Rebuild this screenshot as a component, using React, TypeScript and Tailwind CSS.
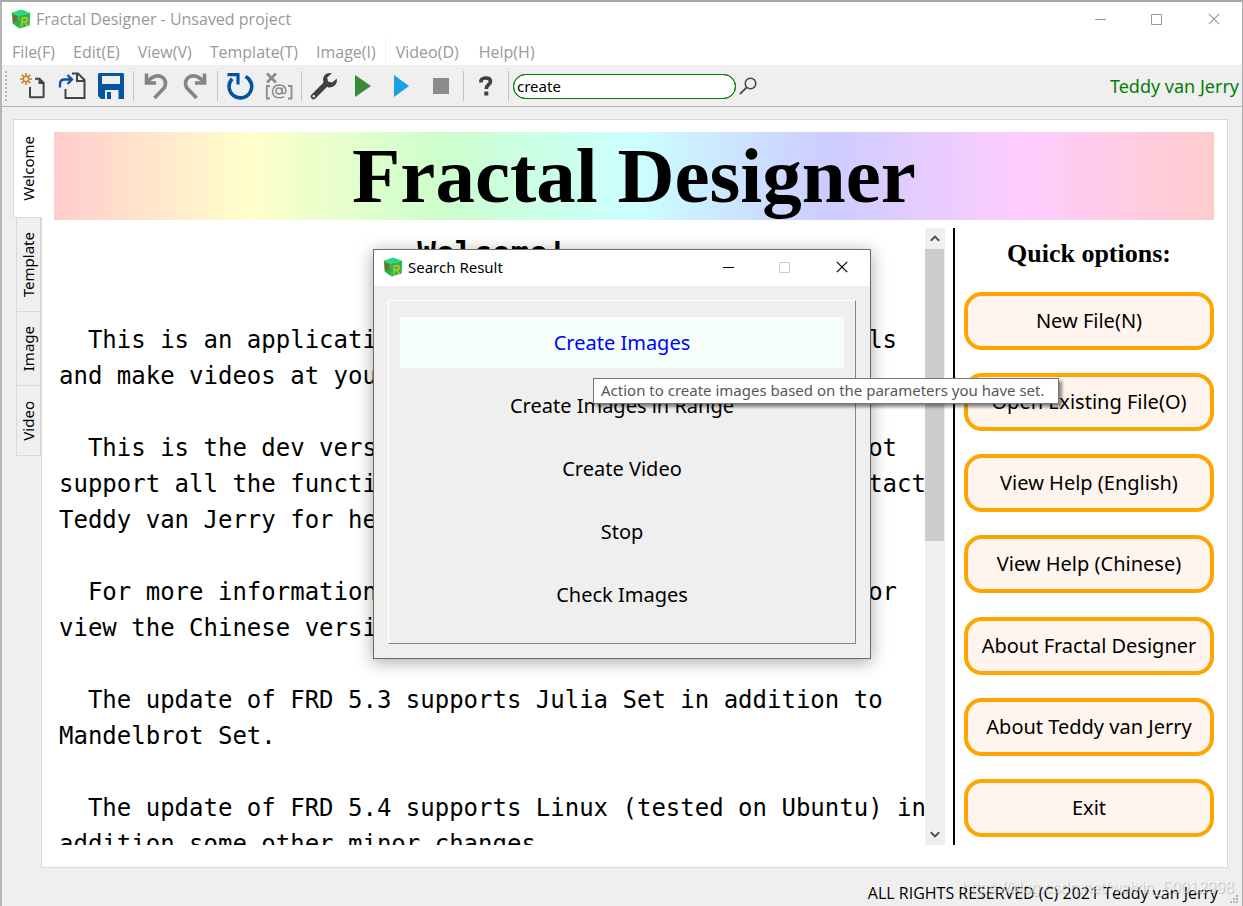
import type { ReactNode } from "react";

function Logo() {
  return (
    <svg width="20" height="20" viewBox="0 0 20 20" aria-hidden="true" className="shrink-0">
      <path d="M.8 3.500L10 .4L19.200 3.800L7.600 6.600Z" fill="#2fe573" />
      <path d="M.8 3.500L7.600 6.600L8.400 19.600L1.600 14.600Z" fill="#25b044" />
      <path d="M7.600 6.600L19.200 3.800L18.600 16.400L8.400 19.600Z" fill="#27b848" />
      <ellipse cx="10.400" cy="3.300" rx="3.700" ry="1.300" fill="none" stroke="#22b4d8" strokeWidth="1" />
      <path d="M3 6.600V13.200M3 7.200L6.200 8.800M3 10L5.800 11.400" fill="none" stroke="#c03a2c" strokeWidth="1.300" />
      <path d="M11 17.400V9.300L14.600 8.600Q16.600 9 16 11.200Q15.400 12.800 11.400 13.200M13.600 13L16.600 16.800" fill="none" stroke="#c2c026" strokeWidth="1.600" />
    </svg>
  );
}

function ToolButton({ label, children }: { label: string; children: ReactNode }) {
  return (
    <button type="button" aria-label={label} className="flex h-8 w-[39px] shrink-0 items-center justify-center">
      {children}
    </button>
  );
}

function Separator() {
  return (
    <div className="flex w-[6px] shrink-0 justify-center">
      <div className="h-[30px] w-px bg-[#c4c4c4]" />
    </div>
  );
}

function Toolbar() {
  return (
    <div className="flex h-[41px] shrink-0 items-center border-b border-[#b4b4b4] bg-[#efefef] pr-[3px]">
      <div className="ml-[3px] mr-[6px] h-[30px] border-l-2 border-dotted border-[#b8b8b8]" />
      <ToolButton label="New file">
        <svg width="28" height="28" viewBox="0 0 28 28" fill="none">
          <path d="M7 1v12M1 7h12M2.8 2.8l8.4 8.4M11.2 2.8l-8.4 8.4" stroke="#c8821e" strokeWidth="1.7" />
          <circle cx="7" cy="7" r="2.6" fill="#efefef" stroke="#c8821e" strokeWidth="1.3" />
          <path d="M16 6.7h4.5L24.6 11v13.4q0 .9-.9.9H11.9q-.9 0-.9-.9V15" stroke="#444" strokeWidth="2" />
          <path d="M19.5 6v6H25.5z" fill="#444" />
        </svg>
      </ToolButton>
      <ToolButton label="Open file">
        <svg width="28" height="28" viewBox="0 0 28 28" fill="none">
          <path d="M14 1.500h6l6.500 6.500v18H7.500V17" stroke="#444" strokeWidth="2" />
          <path d="M19 1v8h7.500" stroke="#444" strokeWidth="2" />
          <path d="M2 15.500V12q0-4.500 4.500-4.500H13M9.500 3l4.500 4.500L9.500 12" stroke="#0354a3" strokeWidth="2.300" />
        </svg>
      </ToolButton>
      <ToolButton label="Save">
        <svg width="28" height="28" viewBox="0 0 28 28">
          <path d="M1 2.500q0-1.500 1.500-1.500h23q1.500 0 1.500 1.500v24.500H21.500V18H8v9H4l-3-3z" fill="#0354a3" />
          <path d="M5 4h18v8H5z" fill="#efefef" />
          <path d="M10 20h4v7h-4z" fill="#0354a3" />
        </svg>
      </ToolButton>
      <Separator />
      <ToolButton label="Undo">
        <svg width="26" height="28" viewBox="0 0 26 28" fill="none" stroke="#858585" strokeWidth="3.6">
          <path d="M3.500 1.500v9.500h9.500" />
          <path d="M3.500 10.500Q11 2 18 4.500Q24.500 8 21.500 15.500L11.500 26" />
        </svg>
      </ToolButton>
      <ToolButton label="Redo">
        <svg width="26" height="28" viewBox="0 0 26 28" fill="none" stroke="#858585" strokeWidth="3.6">
          <path d="M22.500 1.500v9.500H13" />
          <path d="M22.500 10.500Q15 2 8 4.500Q1.500 8 4.500 15.500L14.500 26" />
        </svg>
      </ToolButton>
      <Separator />
      <ToolButton label="Refresh">
        <svg width="28" height="28" viewBox="0 0 28 28" fill="none" stroke="#0354a3" strokeWidth="3.600">
          <path d="M19.500 4.500A11.300 11.300 0 1 1 6.200 6.800" />
          <path d="M1.500 2.600h10.500v10" strokeWidth="3.200" />
        </svg>
      </ToolButton>
      <ToolButton label="Clear values">
        <svg width="28" height="28" viewBox="0 0 28 28" fill="none" stroke="#8c8c8c">
          <path d="M2 1.500l9 9M11 1.500l-9 9" strokeWidth="2.800" />
          <path d="M5 14H1.800v12.500H5M23 14h3.500v12.500H23" strokeWidth="1.800" />
          <circle cx="14" cy="19" r="3" strokeWidth="1.600" />
          <path d="M17.400 15.500l-.5 5.500q3.600 1.600 4-2.600q-.4-5.400-6.600-5.400q-6.500.4-6.800 6.500q.4 6.300 7 6.300q2.800 0 4.500-1.200" strokeWidth="1.500" />
        </svg>
      </ToolButton>
      <Separator />
      <ToolButton label="Settings">
        <svg width="28" height="28" viewBox="0 0 28 28">
          <path d="M3.500 24.500L15 13" stroke="#404040" strokeWidth="5.500" strokeLinecap="round" />
          <path d="M21.800 1.200q-5.300-.8-7.900 3.100q-1.800 3.100-.5 6.200l4.500 4.700q4.200 1.100 7.400-2.200q2.400-3 1.500-6.600l-4.500 4.200-4.200-1-.9-4z" fill="#404040" />
          <circle cx="3.800" cy="24.200" r="1.200" fill="#efefef" />
        </svg>
      </ToolButton>
      <ToolButton label="Run">
        <svg width="16" height="24" viewBox="0 0 16 24"><path d="M0 1l16 11L0 23z" fill="#388a34" /></svg>
      </ToolButton>
      <ToolButton label="Run in range">
        <svg width="16" height="24" viewBox="0 0 16 24"><path d="M0 1l15 11L0 23z" fill="#1ba1e2" /></svg>
      </ToolButton>
      <ToolButton label="Stop">
        <svg width="16" height="16" viewBox="0 0 16 16"><path d="M0 0h16v16H0z" fill="#8c8c8c" /></svg>
      </ToolButton>
      <Separator />
      <ToolButton label="Help">
        <svg width="14" height="20" viewBox="0 0 14 20">
          <path d="M2 6.500V4.500Q3 2 7 2Q11.500 2 11.500 5.500Q11.500 7.500 9 9.300Q7.300 10.500 7.300 13" fill="none" stroke="#404040" strokeWidth="3.600" />
          <path d="M5.300 15.500h4V19.500h-4z" fill="#404040" />
        </svg>
      </ToolButton>
      <Separator />
      <input
        type="text"
        aria-label="Search"
        defaultValue="create"
        className="ml-0.5 h-[25px] w-[223px] rounded-full border border-[#008000] bg-white pl-[3px] text-[15px] text-black outline outline-1 -outline-offset-1 outline-[#008000]"
      />
      <button type="button" aria-label="Search" className="ml-[3px] flex h-8 w-[18px] items-center">
        <svg width="18" height="18" viewBox="0 0 18 18" fill="none" stroke="#444">
          <circle cx="11.500" cy="6.500" r="5.300" strokeWidth="1.500" />
          <path d="M7.700 10.300L.8 17.200" strokeWidth="1.700" />
        </svg>
      </button>
      <span className="ml-auto text-lg text-[#008000]">Teddy van Jerry</span>
    </div>
  );
}

function WindowControls({ color, maxColor }: { color: string; maxColor: string }) {
  return (
    <div className="ml-auto flex items-center">
      <button type="button" aria-label="Minimize" className="flex h-8 w-14 items-center justify-center">
        <svg width="11" height="11" stroke={color}><path d="M0 5.500h11" /></svg>
      </button>
      <button type="button" aria-label="Maximize" className="mr-0.5 flex h-8 w-14 items-center justify-center">
        <svg width="11" height="11" stroke={maxColor} fill="none"><path d="M.5.5h10v10H.5z" /></svg>
      </button>
      <button type="button" aria-label="Close" className="flex h-8 w-14 items-center justify-center">
        <svg width="12" height="12" stroke={color} strokeWidth="1.200"><path d="M.8.800l10.400 10.400M11.200.800L.8 11.200" /></svg>
      </button>
    </div>
  );
}

const menus = ["File(F)", "Edit(E)", "View(V)", "Template(T)", "Image(I)"];
const moreMenus = ["Video(D)", "Help(H)"];

const intro = `  This is an application for you to generate many fractals
and make videos at your will.

  This is the dev version of Fractal Designer and does not
support all the functions of FRD as expected. Please contact
Teddy van Jerry for help.

  For more information, please view the English version or
view the Chinese version.

  The update of FRD 5.3 supports Julia Set in addition to
Mandelbrot Set.

  The update of FRD 5.4 supports Linux (tested on Ubuntu) in
addition some other minor changes.`;

const options = [
  "New File(N)",
  "Open Existing File(O)",
  "View Help (English)",
  "View Help (Chinese)",
  "About Fractal Designer",
  "About Teddy van Jerry",
  "Exit",
];

const results = ["Create Images", "Create Images in Range", "Create Video", "Stop", "Check Images"];

function SideTab({ label, size }: { label: string; size: string }) {
  return (
    <button
      type="button"
      role="tab"
      aria-selected={false}
      className={`ml-[3px] flex w-[25px] items-center justify-center border border-t-0 border-[#d9d9d9] bg-[#efefef] text-[15px] ${size}`}
    >
      <span className="rotate-180 [writing-mode:vertical-rl]">{label}</span>
    </button>
  );
}

function SearchDialog() {
  return (
    <section
      aria-label="Search Result"
      className="absolute left-[373px] top-[247px] flex h-[410px] w-[498px] flex-col border border-[#6b6b6b] bg-[#efefef] shadow-[0_3px_16px_rgba(0,0,0,0.35)]"
    >
      <header className="flex h-9 shrink-0 items-center bg-white pb-0.5 pl-[9px]">
        <Logo />
        <h2 className="ml-[5px] text-[15px]">Search Result</h2>
        <WindowControls color="#000000" maxColor="#cccccc" />
      </header>
      <div className="m-[14px] flex flex-1 flex-col gap-3 border border-b-[#85858f] border-l-white border-r-[#85858f] border-t-white px-[11px] pt-4">
        {results.map((name, i) => (
          <button
            type="button"
            key={name}
            className={i === 0 ? "h-[51px] bg-[#f5fffa] text-xl text-[#0000ff]" : "h-[51px] text-xl"}
          >
            {name}
          </button>
        ))}
      </div>
      <div
        role="tooltip"
        className="absolute left-[219px] top-[128px] flex h-[26px] w-[466px] items-center whitespace-nowrap border border-[#767676] bg-white pb-0.5 pl-[7px] text-[15px] text-[#575757] shadow-[3px_3px_3px_rgba(0,0,0,0.45)]"
      >
        Action to create images based on the parameters you have set.
      </div>
    </section>
  );
}

export default function App() {
  return (
    <div className="relative flex h-screen flex-col overflow-hidden border-r border-t-2 border-r-[#a8a8a8] border-t-[#a8a8a8] bg-[#efefef] font-['Noto_Sans','Open_Sans',sans-serif] text-black">
      <div className="flex min-h-0 flex-1 flex-col border-l-2 border-[#b5b5b5]">
        <header className="flex h-9 shrink-0 items-center bg-white pb-0.5 pl-[9px] text-[#999999]">
          <Logo />
          <h1 className="ml-[5px] font-['Open_Sans',sans-serif] text-base">Fractal Designer - Unsaved project</h1>
          <WindowControls color="#999999" maxColor="#999999" />
        </header>
        <nav className="flex h-7 shrink-0 items-stretch border-b border-[#efefef] bg-white pl-px font-['Open_Sans',sans-serif] text-base text-[#999999]">
          {menus.map((m) => (
            <button type="button" key={m} className="px-[9px]">{m}</button>
          ))}
          <div className="flex border-l border-[#efefef]">
            {moreMenus.map((m) => (
              <button type="button" key={m} className="px-[10px]">{m}</button>
            ))}
          </div>
        </nav>
        <Toolbar />
        <main className="flex min-h-0 flex-1 pl-[11px] pr-[14px] pt-3">
          <div role="tablist" className="z-10 -mr-px flex w-[29px] shrink-0 flex-col">
            <button
              type="button"
              role="tab"
              aria-selected={true}
              className="flex h-[99px] items-center justify-center border border-r-0 border-[#d9d9d9] bg-white text-[15px]"
            >
              <span className="rotate-180 [writing-mode:vertical-rl]">Welcome</span>
            </button>
            <SideTab label="Template" size="h-[94px]" />
            <SideTab label="Image" size="h-[74px]" />
            <SideTab label="Video" size="h-[70px]" />
          </div>
          <div className="flex min-w-0 flex-1 flex-col border border-[#d9d9d9] bg-white pb-[22px] pl-3 pr-[13px] pt-3">
            <div className="flex h-[88px] shrink-0 items-center justify-center bg-[linear-gradient(to_right,#ffcccc,#ffffcc,#ccffcc,#ccffff,#ccccff,#ffccff,#ffcccc)]">
              <span className="font-['Liberation_Serif',serif] text-[79px] font-bold leading-[88px]">Fractal Designer</span>
            </div>
            <div className="mt-2 flex min-h-0 flex-1">
              <article className="min-w-0 flex-1 overflow-hidden pl-[5px] font-['DejaVu_Sans_Mono',monospace]">
                <h2 className="h-[94px] pt-0.5 text-center text-[31px] font-bold leading-[44px]">Welcome!</h2>
                <p className="whitespace-pre text-2xl leading-9">{intro}</p>
              </article>
              <div className="flex w-5 shrink-0 flex-col bg-[#efefef]">
                <button type="button" aria-label="Scroll up" className="flex h-[21px] items-center justify-center">
                  <svg width="10" height="7" fill="none" stroke="#505050" strokeWidth="2"><path d="M.8 5.800L5 1.600l4.200 4.200" /></svg>
                </button>
                <div className="mr-px h-[292px] bg-[#cdcdcd]" />
                <button type="button" aria-label="Scroll down" className="mt-auto flex h-[21px] items-center justify-center">
                  <svg width="10" height="7" fill="none" stroke="#505050" strokeWidth="2"><path d="M.8 1.200L5 5.400l4.200-4.200" /></svg>
                </button>
              </div>
              <aside className="ml-2 flex w-[261px] shrink-0 flex-col border-l-2 border-black pb-2 pl-[9px]">
                <h2 className="h-16 pt-2 text-center font-['Liberation_Serif',serif] text-[26px] font-bold leading-9">Quick options:</h2>
                <div className="flex flex-1 flex-col justify-between">
                  {options.map((o) => (
                    <button
                      type="button"
                      key={o}
                      className="h-[58px] rounded-[18px] border-4 border-[#ffa500] bg-[#fff5ee] text-xl"
                    >
                      {o}
                    </button>
                  ))}
                </div>
              </aside>
            </div>
          </div>
        </main>
        <footer className="relative flex h-[38px] shrink-0 items-center justify-end pr-6 pt-3 font-['Open_Sans',sans-serif] text-base">
          <span>ALL RIGHTS RESERVED (C) 2021 Teddy van Jerry</span>
          <span className="absolute bottom-2 right-2 font-['Liberation_Sans',sans-serif] text-base leading-5 text-white/60 [text-shadow:1px_1px_1px_rgba(0,0,0,0.2)]">
            https://blog.csdn.net/weixin_50012998
          </span>
          <svg width="9" height="9" className="absolute bottom-[2px] right-[3px]" fill="#b4b4b4" aria-hidden="true">
            <path d="M6 0h2v2H6zM3 3h2v2H3zM6 3h2v2H6zM0 6h2v2H0zM3 6h2v2H3zM6 6h2v2H6z" />
          </svg>
        </footer>
      </div>
      <SearchDialog />
    </div>
  );
}
